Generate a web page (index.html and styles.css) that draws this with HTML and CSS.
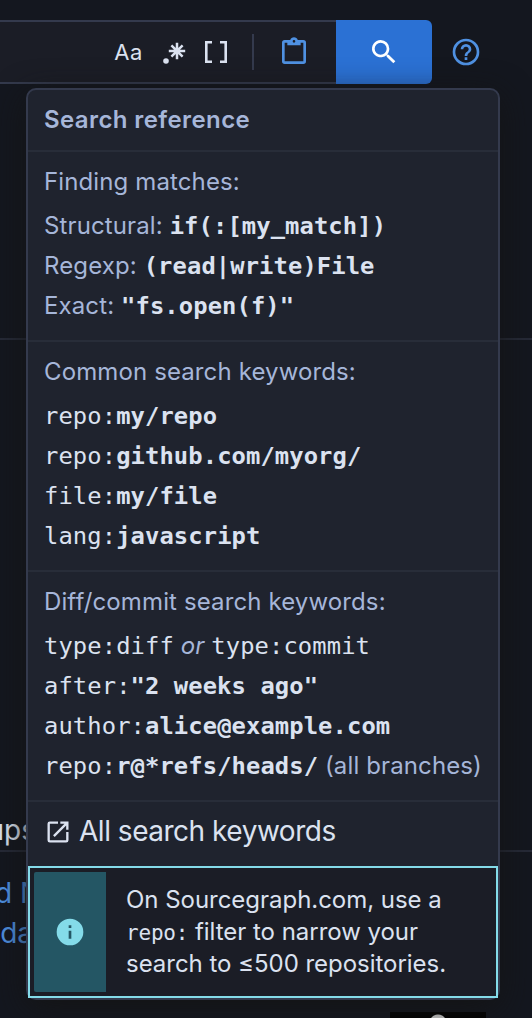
FILE: index.html
```html
<!DOCTYPE html>
<html lang="en">
<head>
<meta charset="utf-8">
<title>Search reference</title>
<link rel="stylesheet" href="styles.css">
</head>
<body>
<div class="page">
  <header class="search-bar">
    <div class="query">
      <span class="case">Aa</span>
      <svg class="regex" width="24" height="24" viewBox="0 0 24 24"><circle cx="4" cy="21" r="2.8" fill="currentColor"/><path d="M15 2.8v16.4M6.8 11h16.4M9.4 5.4l11.2 11.2M20.6 5.4L9.4 16.6" fill="none" stroke="currentColor" stroke-width="2.5"/></svg>
      <svg class="brackets" width="24" height="24" viewBox="0 0 24 24"><path d="M8 2.3H2.3v19.4H8M16 2.3h5.7v19.4H16" fill="none" stroke="currentColor" stroke-width="2.6"/></svg>
      <span class="separator"></span>
      <svg class="clipboard" width="32" height="32" viewBox="0 0 24 24"><path fill="currentColor" d="M19 3h-4.18C14.4 1.84 13.3 1 12 1S9.6 1.84 9.18 3H5a2 2 0 0 0-2 2v14a2 2 0 0 0 2 2h14a2 2 0 0 0 2-2V5a2 2 0 0 0-2-2m-7 0a1 1 0 1 1 0 2 1 1 0 0 1 0-2M7 7h10V5h2v14H5V5h2z"/></svg>
    </div>
    <div class="submit"><svg width="32" height="32" viewBox="0 0 24 24"><path fill="currentColor" d="M9.5 3A6.5 6.5 0 0 1 16 9.5c0 1.61-.59 3.09-1.56 4.23l.27.27h.79l5 5-1.5 1.5-5-5v-.79l-.27-.27A6.5 6.5 0 1 1 9.5 3m0 2a4.5 4.5 0 1 0 0 9 4.5 4.5 0 0 0 0-9"/></svg></div>
    <svg class="help" width="32" height="32" viewBox="0 0 24 24"><path fill="currentColor" d="M11 18h2v-2h-2zm1-16a10 10 0 1 0 0 20 10 10 0 0 0 0-20m0 18a8 8 0 1 1 0-16 8 8 0 0 1 0 16m0-14a4 4 0 0 0-4 4h2a2 2 0 1 1 4 0c0 2-3 1.75-3 5h2c0-2.25 3-2.5 3-5a4 4 0 0 0-4-4"/></svg>
  </header>
  <div class="band"></div>
  <div class="groups"><span class="clip">ups</span></div>
  <div class="links"><span class="clip first">d N</span><span class="clip second">da</span></div>
  <div class="thumb"></div>

  <aside class="panel">
    <h2>Search reference</h2>
    <section>
      <h3>Finding matches:</h3>
      <p>Structural: <code><b>if(:[my_match])</b></code></p>
      <p>Regexp: <code><b>(read|write)File</b></code></p>
      <p>Exact: <code><b>"fs.open(f)"</b></code></p>
    </section>
    <section>
      <h3>Common search keywords:</h3>
      <p><code>repo:<b>my/repo</b></code></p>
      <p><code>repo:<b>github.com/myorg/</b></code></p>
      <p><code>file:<b>my/file</b></code></p>
      <p><code>lang:<b>javascript</b></code></p>
    </section>
    <section>
      <h3>Diff/commit search keywords:</h3>
      <p><code>type:diff</code> <em>or</em> <code>type:commit</code></p>
      <p><code>after:<b>"2 weeks ago"</b></code></p>
      <p><code>author:<b>alice@example.com</b></code></p>
      <p><code>repo:<b>r@*refs/heads/</b></code> <span class="note">(all branches)</span></p>
    </section>
    <div class="all"><svg width="28" height="28" viewBox="0 0 24 24"><path fill="currentColor" d="M14 3v2h3.59l-9.83 9.83 1.41 1.41L19 6.41V10h2V3m-2 16H5V5h7V3H5a2 2 0 0 0-2 2v14a2 2 0 0 0 2 2h14a2 2 0 0 0 2-2v-7h-2z"/></svg><span>All search keywords</span></div>
    <div class="notice">
      <div class="info"><svg width="32" height="32" viewBox="0 0 24 24"><path fill="currentColor" d="M13 9h-2V7h2m0 10h-2v-6h2M12 2a10 10 0 1 0 0 20 10 10 0 0 0 0-20"/></svg></div>
      <div class="message">On Sourcegraph.com, use a<br><code>repo:</code> filter to narrow your<br>search to ≤500 repositories.</div>
    </div>
  </aside>
</div>
</body>
</html>
```
FILE: styles.css
```css
* { box-sizing: border-box; }
body { margin: 0; background: #14171f; color: #dbe2f0; font-family: Inter, "Liberation Sans", sans-serif; font-size: 24px; }
svg { display: block; flex: none; }
.page { position: relative; width: 532px; height: 1018px; overflow: hidden; padding-top: 20px; display: flex; flex-direction: column; }
.search-bar { display: flex; align-items: center; height: 64px; flex: none; color: #dbe2f0; }
.query { width: 336px; height: 64px; display: flex; align-items: center; justify-content: flex-end; background: #1b1d26; border: solid #343a4d; border-width: 2px 0; padding-right: 26px; }
.case { font-size: 22px; letter-spacing: .6px; margin-right: 19px; }
.brackets { margin-left: 18px; }
.separator { width: 2px; height: 36px; background: #343a4d; margin: 0 24px 0 24px; }
.clipboard, .help { color: #4f91e2; }
.submit { width: 96px; height: 64px; background: #2b71d4; color: #fff; border-radius: 0 6px 6px 0; display: flex; align-items: center; justify-content: center; }
.help { margin-left: 18px; }
.band { height: 256px; flex: none; border-bottom: 2px solid #262a37; }
.groups { height: 512px; flex: none; border-bottom: 2px solid #262a37; display: flex; align-items: flex-end; font-size: 28px; }
.clip { width: 36px; display: flex; justify-content: flex-end; white-space: nowrap; line-height: 40px; }
.links { color: #4f91e2; font-size: 28px; padding-top: 21px; flex: none; height: 160px; }
.first { width: 41px; }
.second { width: 33px; }
.thumb { width: 96px; height: 6px; flex: none; margin-left: 390px; background: radial-gradient(circle at 48px 11px, #dedede 8px, #000 9px); }
.panel { position: absolute; left: 26px; top: 88px; width: 474px; height: 912px; background: #1f232e; border: 2px solid #343a4d; border-radius: 10px; box-shadow: 0 8px 32px rgba(20, 20, 20, .9); color: #a6b6d9; }
h2, h3, p { margin: 0; font-size: 24px; letter-spacing: .12px; }
h2 { height: 60px; line-height: 59px; padding-left: 16px; font-weight: 600; letter-spacing: .4px; }
section { border-top: 2px solid #282d39; padding: 14px 0 14px 16px; }
h3 { font-weight: 400; line-height: 32px; margin-bottom: 8px; }
p { height: 40px; line-height: 40px; white-space: nowrap; }
code { font-family: "DejaVu Sans Mono", monospace; font-size: 23.8px; line-height: 1; color: #dbe2f0; letter-spacing: .1px; }
.all { border-top: 2px solid #282d39; height: 66px; display: flex; align-items: center; gap: 7px; padding: 0 0 7px 16px; font-size: 28px; letter-spacing: -.48px; color: #dbe2f0; }
.all svg { margin-top: 3px; }
.notice { height: 132px; border: 2px solid #84dbe9; padding: 4px; display: flex; background: #1b1d26; color: #dbe2f0; }
.info { width: 72px; border-radius: 2px 0 0 2px; background: #245664; color: #84dbe9; display: flex; align-items: center; justify-content: center; }
.message { padding: 12px 0 0 20px; line-height: 32px; white-space: nowrap; letter-spacing: -.03px; }
.message code { font-size: 21px; letter-spacing: -.2px; }
```
